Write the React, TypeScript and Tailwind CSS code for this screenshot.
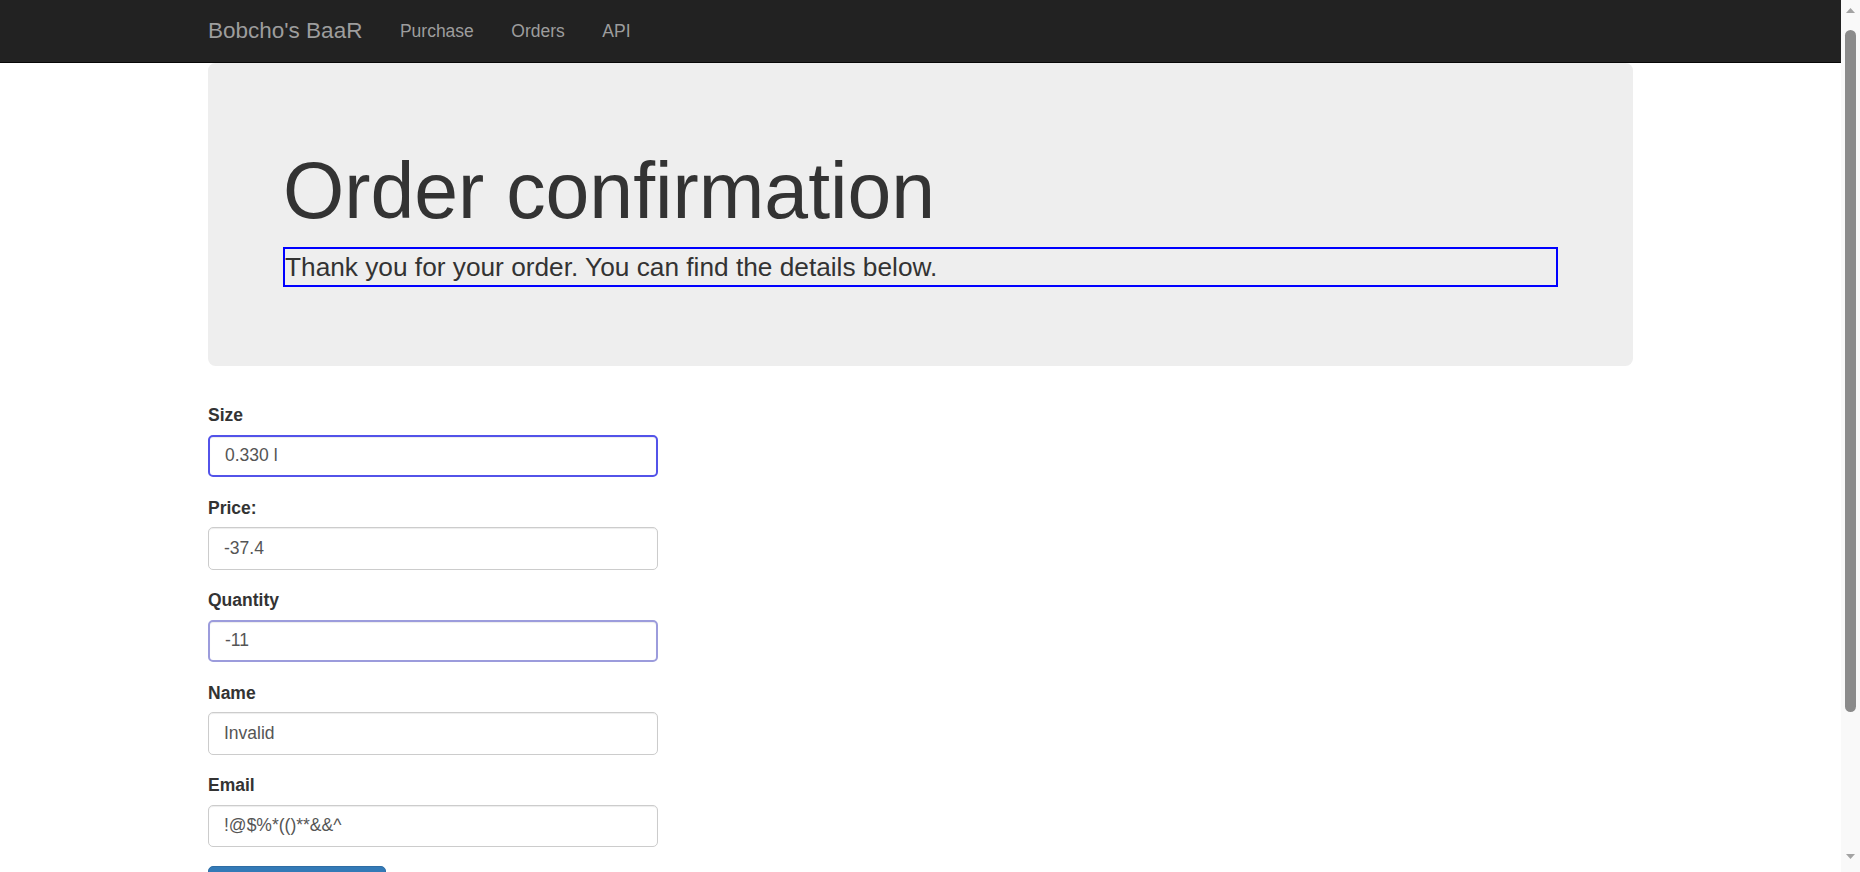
import React from "react";

const fields = [
  { label: "Size", value: "0.330 l", ring: "border-2 border-[#5353e9]" },
  { label: "Price:", value: "-37.4", ring: "border border-[#ccc]" },
  { label: "Quantity", value: "-11", ring: "border-2 border-[#9c9cdc]" },
  { label: "Name", value: "Invalid", ring: "border border-[#ccc]" },
  { label: "Email", value: "!@$%*(()**&&^", ring: "border border-[#ccc]" },
];

const Navbar = () => (
  <nav className="h-[63px] bg-[#222] border-b border-[#080808]">
    <div className="mx-auto w-[1425px] h-full flex items-center gap-[37.5px]">
      <a className="text-[22.5px] text-[#9d9d9d]">Bobcho's BaaR</a>
      <a className="text-[17.5px] text-[#9d9d9d]">Purchase</a>
      <a className="text-[17.5px] text-[#9d9d9d]">Orders</a>
      <a className="text-[17.5px] text-[#9d9d9d]">API</a>
    </div>
  </nav>
);

const Scrollbar = () => (
  <div className="w-[19px] h-full bg-[#f9f9f9] flex flex-col items-center">
    <div className="h-[30px] flex items-center justify-center pb-[10px]">
      <svg width="9" height="5" viewBox="0 0 9 5">
        <path d="M0 5 L4.5 0 L9 5 Z" fill="#a3a3a3" />
      </svg>
    </div>
    <div className="w-[11px] h-[682px] rounded-full bg-[#8b8b8b]" />
    <div className="flex-1" />
    <div className="h-[24px] flex items-center justify-center pb-[8px]">
      <svg width="9" height="5" viewBox="0 0 9 5">
        <path d="M0 0 L9 0 L4.5 5 Z" fill="#a3a3a3" />
      </svg>
    </div>
  </div>
);

export default function App() {
  return (
    <div className="flex w-[1860px] h-[872px] overflow-hidden bg-white text-[#333] font-['Liberation_Sans',Arial,sans-serif]">
      <div className="flex-1 min-w-0">
        <Navbar />
        <div className="mx-auto w-[1425px]">
          <div className="bg-[#eee] rounded-[7.5px] px-[75px] py-[60px] mb-[37.5px]">
            <h1 className="mt-[25px] mb-[12.5px] text-[78.75px] leading-[1.1] font-normal">
              Order confirmation
            </h1>
            <p className="mb-[18.75px] text-[26.25px] leading-[36px] border-2 border-[#0000ff]">
              Thank you for your order. You can find the details below.
            </p>
          </div>

          <form>
            {fields.map((f) => (
              <div key={f.label} className="mb-[18.75px]">
                <label className="inline-block mb-[6.25px] text-[17.5px] leading-[25px] font-bold">
                  {f.label}
                </label>
                <input
                  readOnly
                  defaultValue={f.value}
                  className={`block w-[450px] h-[42.5px] px-[15px] py-[7.5px] text-[17.5px] text-[#555] bg-white rounded-[5px] shadow-[inset_0_1px_1px_rgba(0,0,0,0.075)] outline-none ${f.ring}`}
                />
              </div>
            ))}
            <button
              type="button"
              aria-label="Back"
              className="block w-[178px] h-[42.5px] bg-[#337ab7] border border-[#2e6da4] rounded-[5px]"
            />
          </form>
        </div>
      </div>
      <Scrollbar />
    </div>
  );
}
